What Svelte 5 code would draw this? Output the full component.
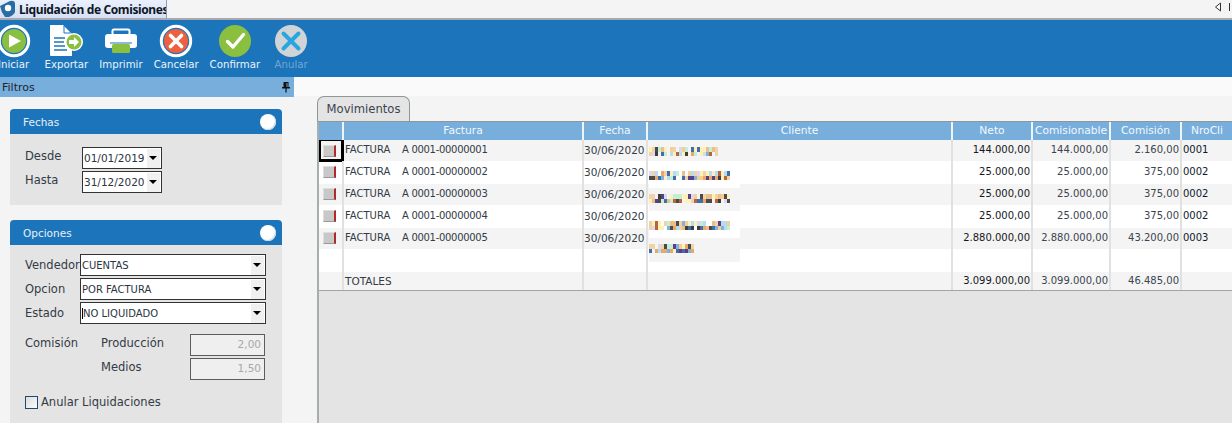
<script>
	const tools = ['iniciar', 'exportar', 'imprimir', 'cancelar', 'confirmar', 'anular'];
	const labels = {
		iniciar: 'Iniciar',
		exportar: 'Exportar',
		imprimir: 'Imprimir',
		cancelar: 'Cancelar',
		confirmar: 'Confirmar',
		anular: 'Anular'
	};

	const rows = [
		{ nro: '00000001', neto: '144.000,00', base: '144.000,00', com: '2.160,00', cli: '0001' },
		{ nro: '00000002', neto: '25.000,00', base: '25.000,00', com: '375,00', cli: '0002' },
		{ nro: '00000003', neto: '25.000,00', base: '25.000,00', com: '375,00', cli: '0002' },
		{ nro: '00000004', neto: '25.000,00', base: '25.000,00', com: '375,00', cli: '0002' },
		{ nro: '00000005', neto: '2.880.000,00', base: '2.880.000,00', com: '43.200,00', cli: '0003' }
	];

	// client names are pixelated in the reference, so they are drawn as mosaics
	const light = ['#f6cd92', '#fff0b8', '#c4eed6', '#b4dcf6', '#f0d4a8', '#dcd8f0', '#e8c088'];
	const dark = ['#3f6fa9', '#5b4088', '#3d3d3d', '#b4673a', '#7fb2de', '#4a4a4a', '#e8a868'];
	const names = [
		{ y: 7, w: 69, fill: '#f4f4f4', top: 0, h: 21 },
		{ y: 31, w: 81, fill: '#ffffff', top: 21, h: 27 },
		{ y: 54, w: 81, fill: '#f4f4f4', top: 48, h: 23 },
		{ y: 81, w: 81, fill: '#ffffff', top: 71, h: 27 },
		{ y: 104, w: 43, fill: '#f4f4f4', top: 98, h: 24 }
	];
	let seed = 17;
	function rnd(n) {
		seed = (seed * 137 + 71) % 2053;
		return seed % n;
	}
	const blocks = [];
	for (const n of names) {
		for (let x = 0; x < n.w; x += 3) {
			if (rnd(9) > 0) blocks.push({ x, y: n.y, h: 5, fill: rnd(4) ? light[rnd(light.length)] : dark[rnd(dark.length)] });
			if (rnd(7) > 0) blocks.push({ x, y: n.y + 5, h: 4, fill: rnd(3) ? dark[rnd(dark.length)] : light[rnd(light.length)] });
		}
	}
</script>

<div class="app">
	<div class="tabstrip">
		<div class="doctab">
			<svg class="logo" width="16" height="18" viewBox="0 0 16 18">
				<path d="M0 6 L10 1 Q15 0 15 4 L15 12 Q14 15 9 17 L5 17 Q1 12 0 6Z" fill="#2b6ca3" />
				<circle cx="8" cy="8" r="3.2" fill="#fff" />
			</svg>
			<span>Liquidación de Comisiones</span>
		</div>
		<div class="arrows">
			<svg width="18" height="12" viewBox="0 0 18 12">
				<path d="M6.5 2 L1.5 6 L6.5 10Z" fill="#fff" stroke="#333" />
				<path d="M15.5 2 L15.5 10" stroke="#333" />
			</svg>
		</div>
	</div>

	<div class="toolbar">
		{#each tools as t}
			<div class="tool" class:off={t === 'anular'}>
				<svg width="34" height="34" viewBox="0 0 34 34">
					{#if t === 'iniciar'}
						<circle cx="17" cy="17" r="14.7" fill="#1c75ba" stroke="#fff" stroke-width="3" />
						<circle cx="17" cy="17" r="12" fill="#8bbf3f" />
						<path d="M12 10.5 L24 17 L12 23.5Z" fill="#fff" />
					{:else if t === 'exportar'}
						<path d="M1 1 H14 L23 10 V32 H2 Q1 32 1 31Z" fill="#fff" />
						<path d="M15 2 V9 H22" fill="none" stroke="#1c75ba" />
						<path d="M5 14 H16 M5 18 H15 M5 22 H16 M5 26 H18" stroke="#1c75ba" stroke-width="1.3" />
						<circle cx="25" cy="18" r="9" fill="#fff" />
						<circle cx="25" cy="18" r="7.5" fill="#8bbf3f" />
						<path d="M20 16 H25 V13 L30 18 L25 23 V20 H20Z" fill="#fff" />
					{:else if t === 'imprimir'}
						<path d="M8.5 10 V7 Q8.5 5.5 10 5.5 H24 Q25.5 5.5 25.5 7 V10" fill="none" stroke="#fff" stroke-width="2" />
						<rect x="1" y="10" width="32" height="14" rx="3" fill="#fff" />
						<rect x="8" y="20" width="18" height="9" rx="1.5" fill="#8bbf3f" />
						<rect x="6" y="18" width="22" height="2" fill="#1c75ba" opacity="0.5" />
					{:else if t === 'cancelar'}
						<circle cx="17" cy="17" r="14.7" fill="#1c75ba" stroke="#fff" stroke-width="3" />
						<circle cx="17" cy="17" r="12" fill="#f1603c" />
						<path d="M11.5 11.5 L22.5 22.5 M22.5 11.5 L11.5 22.5" stroke="#fff" stroke-width="3.6" stroke-linecap="round" />
					{:else if t === 'confirmar'}
						<circle cx="17" cy="17" r="16" fill="#8bbf3f" />
						<path d="M9.5 17.5 L15 23 L25.5 10.5" fill="none" stroke="#fff" stroke-width="3.4" stroke-linecap="round" stroke-linejoin="round" />
					{:else}
						<circle cx="17" cy="17" r="16" fill="#d1d4d7" />
						<path d="M9.5 9.5 L24.5 24.5 M24.5 9.5 L9.5 24.5" stroke="#29a5df" stroke-width="4" stroke-linecap="round" />
					{/if}
				</svg>
				<span>{labels[t]}</span>
			</div>
		{/each}
	</div>

	<div class="workspace">
		<aside class="filters">
			<div class="filters-title">
				<span>Filtros</span>
				<svg width="10" height="12" viewBox="0 0 10 12">
					<path d="M2.5 1 H7.5 V6 H9 V7.5 H5.6 V11.5 H4.4 V7.5 H1 V6 H2.5Z M5.5 2 V6 H6.5 V2Z" fill="#111" fill-rule="evenodd" />
				</svg>
			</div>

			<section class="card fechas">
				<header><span>Fechas</span><i class="knob"></i></header>
				<div class="card-body dates">
					<label for="desde">Desde</label>
					<div class="combo date" id="desde"><span>01/01/2019</span><b></b></div>
					<label for="hasta">Hasta</label>
					<div class="combo date" id="hasta"><span>31/12/2020</span><b></b></div>
				</div>
			</section>

			<section class="card opciones">
				<header><span>Opciones</span><i class="knob"></i></header>
				<div class="card-body">
					<div class="selects">
						<span>Vendedor</span>
						<div class="combo"><span>CUENTAS</span><b></b></div>
						<span>Opcion</span>
						<div class="combo"><span>POR FACTURA</span><b></b></div>
						<span>Estado</span>
						<div class="combo focused"><span>NO LIQUIDADO</span><b></b></div>
					</div>
					<div class="rates">
						<span>Comisión</span>
						<span>Producción</span>
						<div class="rate">2,00</div>
						<span></span>
						<span>Medios</span>
						<div class="rate">1,50</div>
					</div>
					<div class="check"><i></i><span>Anular Liquidaciones</span></div>
				</div>
			</section>
		</aside>

		<main class="content">
			<div class="strip"></div>
			<div class="tabhead"><div class="tab">Movimientos</div></div>
			<div class="pane">
				<div class="grid">
					<div class="line head">
						<div></div>
						<div>Factura</div>
						<div>Fecha</div>
						<div>Cliente</div>
						<div>Neto</div>
						<div>Comisionable</div>
						<div>Comisión</div>
						<div>NroCli</div>
					</div>
					{#each rows as r, i}
						<div class="line">
							<div class="sel" class:current={i === 0}><i class="btn"></i></div>
							<div class="tipo"><span class="doc">FACTURA</span><span class="nro">A 0001-{r.nro}</span></div>
							<div class="date-cell">30/06/2020</div>
							<div></div>
							<div class="num strong">{r.neto}</div>
							<div class="num">{r.base}</div>
							<div class="num">{r.com}</div>
							<div class="code">{r.cli}</div>
						</div>
					{/each}
					<div class="line">
						<div></div><div></div><div></div><div></div><div></div><div></div><div></div><div></div>
					</div>
					<div class="line totals">
						<div></div>
						<div class="label">TOTALES</div>
						<div></div>
						<div></div>
						<div class="num strong">3.099.000,00</div>
						<div class="num">3.099.000,00</div>
						<div class="num">46.485,00</div>
						<div></div>
					</div>

					<svg class="mosaic" width="92" height="122" viewBox="0 0 92 122" shape-rendering="crispEdges">
						{#each names as n}
							<rect x="0" y={n.top} width="91" height={n.h} fill={n.fill} />
						{/each}
						{#each blocks as b}
							<rect x={b.x} y={b.y} width="3" height={b.h} fill={b.fill} />
						{/each}
					</svg>
				</div>
			</div>
		</main>
	</div>
</div>

<style>
	:global(body) {
		margin: 0;
		background: #f4f4f4;
	}
	.app {
		width: 1232px;
		height: 423px;
		overflow: hidden;
		display: flex;
		flex-direction: column;
		font-family: 'DejaVu Sans', 'Noto Sans', sans-serif;
		font-size: 11px;
		color: #333b46;
		background: #f4f4f4;
	}

	.tabstrip {
		height: 18px;
		flex: none;
		display: flex;
		justify-content: space-between;
		border-bottom: 2px solid #a9a9ad;
		background: #f4f4f4;
	}
	.doctab {
		width: 167px;
		height: 18px;
		box-sizing: border-box;
		display: flex;
		align-items: center;
		gap: 3px;
		background: linear-gradient(#eaf0fd, #d5e0f7);
		border-right: 1px solid #8e9bb5;
		font-family: 'Noto Sans', 'DejaVu Sans', sans-serif;
		font-size: 12px;
		letter-spacing: -0.38px;
		font-weight: 700;
		color: #10161f;
		white-space: nowrap;
		overflow: hidden;
	}
	.logo {
		flex: none;
	}
	.arrows {
		padding-top: 1px;
		line-height: 0;
	}

	.toolbar {
		height: 57px;
		flex: none;
		display: flex;
		background: #1c75ba;
	}
	.tool {
		margin-top: 4px;
		min-width: 51px;
		padding: 0 5.5px;
		box-sizing: border-box;
		display: flex;
		flex-direction: column;
		align-items: center;
		color: #eaf3fb;
		font-size: 10.2px;
		white-space: nowrap;
	}
	.tool:first-child {
		margin-left: -12px;
	}
	.tool svg {
		display: block;
		margin-bottom: 1px;
	}
	.tool.off {
		color: #6fa6d4;
	}

	.workspace {
		flex: 1;
		display: flex;
		min-height: 0;
	}
	.filters {
		width: 294px;
		flex: none;
	}
	.filters-title {
		height: 20px;
		box-sizing: border-box;
		padding: 0 3px 0 2px;
		display: flex;
		align-items: center;
		justify-content: space-between;
		background: #78aedc;
		color: #1c2530;
		font-size: 11px;
	}

	.card {
		margin: 12px 12px 15px 10px;
	}
	.card header {
		height: 25px;
		box-sizing: border-box;
		padding: 0 6px 0 13px;
		display: flex;
		align-items: center;
		justify-content: space-between;
		background: #1c75ba;
		border-radius: 4px 4px 0 0;
		color: #e6f0f9;
		font-size: 10.5px;
	}
	.knob {
		width: 16px;
		height: 16px;
		border-radius: 50%;
		background: #fff;
		box-shadow: inset -1px -1px 1px #c9d6e2;
	}
	.card-body {
		background: #e4e4e4;
		padding: 13px 15px 0;
		font-size: 11.5px;
	}
	.dates {
		height: 71px;
		box-sizing: border-box;
		display: grid;
		grid-template-columns: 57px 80px;
		grid-auto-rows: 22px;
		row-gap: 2px;
		align-items: start;
	}
	.dates label {
		line-height: 19px;
	}
	.opciones .card-body {
		height: 178px;
		box-sizing: border-box;
		padding-top: 9px;
	}

	.combo {
		height: 22px;
		box-sizing: border-box;
		display: flex;
		align-items: center;
		justify-content: space-between;
		background: #fff;
		border: 1.5px solid #333;
		padding: 0 1px 0 1px;
		font-size: 10px;
		color: #2c3440;
	}
	.combo.date {
		font-size: 10.5px;
	}
	.combo b {
		width: 13px;
		height: 19px;
		flex: none;
		background: #f0f0f0;
		position: relative;
	}
	.combo b::after {
		content: '';
		position: absolute;
		left: 2px;
		top: 7px;
		border: 4px solid transparent;
		border-top: 4px solid #000;
		border-bottom: 0;
	}
	.focused span {
		border-left: 1px solid #000;
	}
	.selects {
		display: grid;
		grid-template-columns: 55px 186px;
		grid-auto-rows: 22px;
		row-gap: 2px;
		align-items: center;
	}
	.selects > span {
		white-space: nowrap;
	}
	.rates {
		margin-top: 10px;
		display: grid;
		grid-template-columns: 76px 89px 75px;
		grid-auto-rows: 22px;
		row-gap: 2px;
		align-items: start;
	}
	.rates > span {
		line-height: 19px;
	}
	.rate {
		height: 22px;
		box-sizing: border-box;
		border: 1.5px solid #5c5c5c;
		background: #efefef;
		color: #a8a8a8;
		text-align: right;
		padding-right: 3px;
		line-height: 19px;
		font-size: 10.5px;
	}
	.check {
		margin-top: 15px;
		display: flex;
		align-items: center;
		gap: 3px;
	}
	.check i {
		width: 13px;
		height: 13px;
		box-sizing: border-box;
		border: 1px solid #1f4a70;
		background: linear-gradient(135deg, #dcdcdc, #fbfbfb);
	}

	.content {
		flex: 1;
		min-width: 0;
		display: flex;
		flex-direction: column;
	}
	.strip {
		height: 19px;
		flex: none;
		background: #fafafa;
	}
	.tabhead {
		height: 25px;
		flex: none;
		padding-left: 23px;
	}
	.tab {
		width: 93px;
		height: 25px;
		box-sizing: border-box;
		border: 1px solid #8d9698;
		border-bottom: 0;
		border-radius: 7px 7px 0 0;
		background: #e4e4e4;
		text-align: center;
		line-height: 24px;
		font-size: 11.6px;
		color: #3a4450;
	}
	.pane {
		flex: 1;
		margin-left: 23px;
		background: #e4e4e4;
		border-left: 2px solid #a8aeb0;
		border-top: 1px solid #8d9698;
	}
	.grid {
		position: relative;
		border-bottom: 1.5px solid #a3a3a3;
	}
	.line {
		display: grid;
		grid-template-columns: 25px 240px 64px 305px 80px 78px 71px 1fr;
		height: 21px;
		background: #f4f4f4;
		line-height: 14px;
		font-size: 10px;
		white-space: nowrap;
	}
	.line:nth-child(odd) {
		height: 23px;
		background: #fff;
	}
	.line > div {
		box-sizing: border-box;
		border-right: 2px solid #e1e1e1;
		padding: 3px 1px 0;
		overflow: hidden;
	}
	.line:nth-child(odd) > div {
		padding-top: 4px;
	}
	.line > div:last-of-type {
		border-right: 0;
	}
	.line.head {
		height: 18px;
		background: #78aedc;
		color: #f2f8fd;
		font-size: 10.7px;
	}
	.line.head > div {
		border-right-color: #f0f5fa;
		text-align: center;
		padding-top: 2px;
	}
	.line.totals {
		height: 18px;
		background: #f4f4f4;
	}
	.line.totals > div {
		padding-top: 2px;
	}
	.date-cell {
		font-size: 10.5px;
	}
	.line > .date-cell {
		padding-left: 0;
	}
	.num {
		text-align: right;
		color: #3c444f;
	}
	.strong {
		color: #14181d;
	}
	.code {
		color: #101a2c;
	}
	.label {
		font-size: 10.5px;
	}
	.tipo {
		display: flex;
	}
	.doc {
		width: 57px;
	}
	.nro {
		letter-spacing: -0.3px;
	}
	.line > .sel {
		padding: 4px 0 0 4px;
	}
	.line:nth-child(odd) > .sel {
		padding-top: 5px;
	}
	.line > .sel.current {
		height: 22px;
		border: solid #000;
		border-width: 1px 3px 3px 2px;
		padding: 4px 0 0 2px;
		background: #f4f4f4;
	}
	.btn {
		display: block;
		width: 13px;
		height: 12px;
		box-sizing: border-box;
		background: #c8c8c8;
		border: 1px solid #dedede;
		border-right: 2px solid #b02a2a;
		border-bottom-color: #999;
	}
	.mosaic {
		position: absolute;
		left: 330px;
		top: 18px;
	}
</style>
